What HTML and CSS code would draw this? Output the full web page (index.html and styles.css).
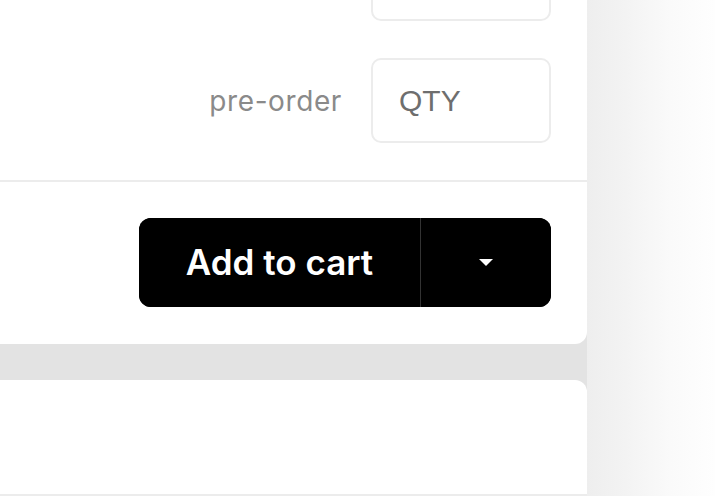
FILE: index.html
```html
<!DOCTYPE html>
<html lang="en">
<head>
<meta charset="UTF-8">
<meta name="viewport" content="width=device-width, initial-scale=1.0">
<title>Order</title>
<link rel="stylesheet" href="styles.css">
</head>
<body>
<div class="page">
  <div class="main">
    <div class="card order-card">
      <div class="rows">
        <div class="row">
          <input type="text" class="qty" placeholder="QTY">
        </div>
        <div class="row">
          <label class="row-label" for="preorderQty">pre-order</label>
          <input type="text" class="qty" id="preorderQty" placeholder="QTY">
        </div>
      </div>
      <div class="actions">
        <div class="split-btn">
          <button class="btn-main">Add to cart</button>
          <button class="btn-toggle" aria-label="More options">
            <svg width="16" height="9" viewBox="0 0 16 9"><path d="M1 1h14L8 8z" fill="#fff"/></svg>
          </button>
        </div>
      </div>
    </div>
    <div class="card next-card"></div>
  </div>
  <div class="side"></div>
</div>
</body>
</html>
```

FILE: styles.css
```css
html, body { margin: 0; height: 100%; overflow: hidden; }
body { font-family: Inter, "Liberation Sans", sans-serif; background: #fff; }
.page { display: flex; height: 496px; }
.main {
  width: 587px;
  background: #e3e3e3;
  display: flex;
  flex-direction: column;
  gap: 36px;
}
.side {
  flex: 1;
  background: linear-gradient(to right, #eeeeee 0%, #f3f3f3 30%, #fafafa 65%, #fefefe 100%);
}
.card { background: #fff; }
.order-card {
  margin-top: -64px;
  border-radius: 0 0 12px 0;
}
.next-card {
  flex: 1;
  border-radius: 0 12px 0 0;
  border-bottom: 2px solid #ececec;
}
.rows {
  display: flex;
  flex-direction: column;
  gap: 37px;
  padding: 0 36px 37px 0;
  border-bottom: 2px solid #ececec;
}
.row {
  display: flex;
  justify-content: flex-end;
  align-items: center;
  gap: 29px;
}
.row-label {
  font-size: 28px;
  color: #8a8a8a;
  letter-spacing: 0.6px;
}
.qty {
  box-sizing: border-box;
  width: 180px;
  height: 85px;
  border: 2px solid #ececec;
  border-radius: 10px;
  padding: 0 0 0 26px;
  font-family: "Liberation Sans", Arial, sans-serif;
  font-size: 30px;
  outline: none;
}
.qty::placeholder { color: #6e6e6e; }
.actions {
  display: flex;
  justify-content: flex-end;
  padding: 36px 36px 37px 0;
}
.split-btn {
  display: flex;
  height: 89px;
  background: #000;
  border-radius: 12px;
  overflow: hidden;
}
.split-btn button {
  background: #000;
  color: #fff;
  border: none;
  cursor: pointer;
  font-family: Inter, "Liberation Sans", sans-serif;
}
.btn-main {
  width: 282px;
  font-size: 35px;
  font-weight: 600;
  padding: 0 0 2px 0;
  border-right: 1px solid #333 !important;
}
.btn-toggle {
  width: 130px;
  display: flex;
  align-items: center;
  justify-content: center;
}
```
